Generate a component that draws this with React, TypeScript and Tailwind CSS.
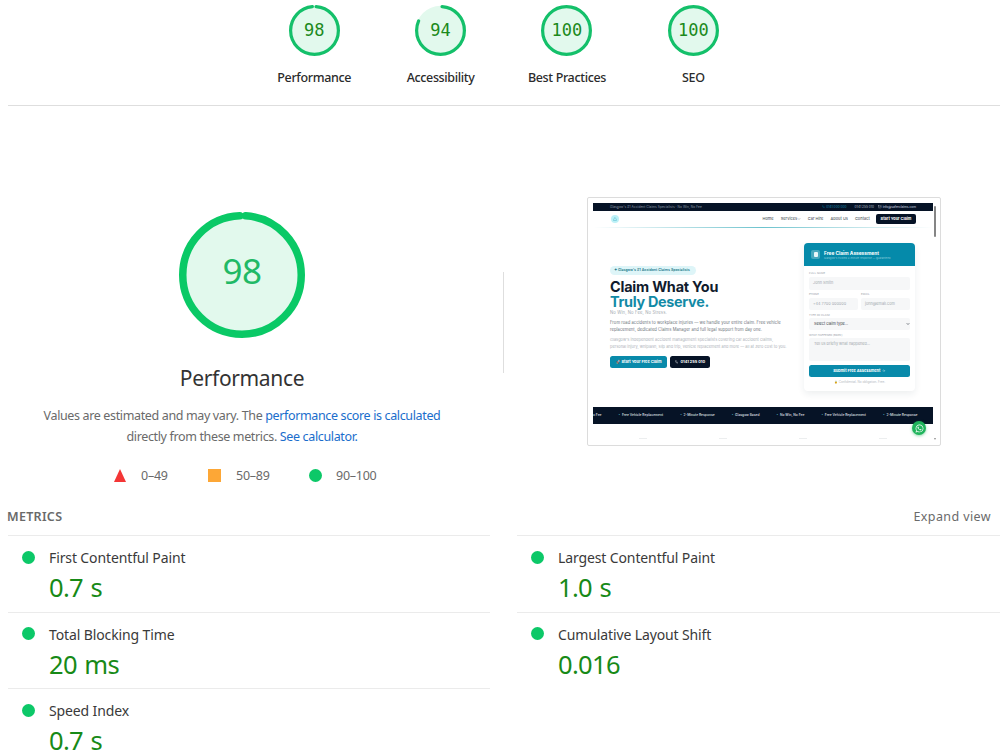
import React from 'react';
import { ArrowRight, ChevronDown, Mail, Phone, Triangle } from 'lucide-react';
import { FaWhatsapp } from 'react-icons/fa';

interface GaugeProps {
    score: number;
    arc: number;
    size: number;
    stroke: number;
    color: string;
    textClass: string;
}

const Gauge: React.FC<GaugeProps> = ({ score, arc, size, stroke, color, textClass }) => {
    const r = (size - stroke) / 2;
    const c = 2 * Math.PI * r;
    return (
        <div className="grid place-items-center">
            <svg width={size} height={size} className="col-start-1 row-start-1 -rotate-90">
                <circle cx={size / 2} cy={size / 2} r={r + stroke / 4} fill="#e2f9ed" />
                <circle
                    cx={size / 2}
                    cy={size / 2}
                    r={r}
                    fill="none"
                    stroke={color}
                    strokeWidth={stroke}
                    strokeLinecap={arc < 1 ? 'round' : 'butt'}
                    strokeDasharray={`${arc * c} ${c}`}
                    strokeDashoffset={arc < 1 ? -stroke / 2 : 0}
                />
            </svg>
            <span className={`z-10 col-start-1 row-start-1 ${textClass}`}>{score}</span>
        </div>
    );
};

const categories = [
    { label: 'Performance', score: 98, arc: 0.968 },
    { label: 'Accessibility', score: 94, arc: 0.8 },
    { label: 'Best Practices', score: 100, arc: 1 },
    { label: 'SEO', score: 100, arc: 1 },
];

const leftMetrics = [
    { label: 'First Contentful Paint', value: '0.7 s' },
    { label: 'Total Blocking Time', value: '20 ms' },
    { label: 'Speed Index', value: '0.7 s' },
];

const rightMetrics = [
    { label: 'Largest Contentful Paint', value: '1.0 s' },
    { label: 'Cumulative Layout Shift', value: '0.016' },
];

const Metric = ({ label, value }: { label: string; value: string }) => (
    <div className="flex h-[76.7px] shrink-0 border-t border-[#ebebeb] pl-[13.5px] pt-[15px]">
        <div className="-mt-[0.5px] size-[13px] shrink-0 rounded-full bg-[#0cc868]" />
        <div className="ml-[14.5px] whitespace-nowrap">
            <div className="-mt-[2px] text-[14px] leading-[18px] tracking-[-0.12px] text-[#3a3a3a]">{label}</div>
            <div className="mt-[3px] text-[25.5px] leading-[34px] tracking-[-0.65px] text-[#178a17] [word-spacing:1.5px]">{value}</div>
        </div>
    </div>
);

const Field = ({ label, placeholder }: { label: string; placeholder: string }) => (
    <div className="flex-1">
        <div className="text-[2.7px] leading-[4px] tracking-[0.1px] text-[#9aa1a8]">{label}</div>
        <div className="mt-[2px] flex h-[12.5px] items-center rounded-[2px] bg-[#f6f7f8] pl-[4px] text-[3.8px] text-[#a3a9af]">
            {placeholder}
        </div>
    </div>
);

const tickerItems = ['Free Vehicle Replacement', '2-Minute Response', 'Glasgow Based', 'No Win, No Fee', 'Free Vehicle Replacement', '2-Minute Response'];

// Final page capture shown next to the main gauge
const PageThumbnail = () => (
    <div className="relative h-[249px] w-[354px] rounded-[2px] border border-[#dcdcdc] bg-white pl-[5px] pt-[5px] font-[Inter,sans-serif]">
        <div className="relative h-[238px] w-[340px] overflow-hidden whitespace-nowrap bg-white">
            <div className="flex h-[8px] items-center bg-[#061326] pl-[17px] pr-[17px] text-[3.2px] text-[#8d99a8]">
                <span className="tracking-[0.06px]">Glasgow's #1 Accident Claims Specialists · No Win, No Fee</span>
                <span className="ml-auto flex items-center gap-[1px] text-[#128fb0]"><Phone size={3} />0141 000 000</span>
                <span className="ml-[8px] text-[#b5bec9]">0141 255 010</span>
                <span className="ml-[4px] flex items-center gap-[1px] text-[#d5dbe2]"><Mail size={3.5} />info@saferclaims.com</span>
            </div>
            <div className="flex h-[16px] items-center pl-[18px] pr-[17px] text-[3.9px] font-medium tracking-[0.05px] text-[#505962]">
                <div className="grid size-[8px] place-items-center rounded-full bg-[#bdf1f7] text-[#159cb8]">
                    <Triangle size={4} />
                </div>
                <span className="ml-auto">Home</span>
                <span className="ml-[7px] flex items-center">Services<ChevronDown size={4} /></span>
                <span className="ml-[6.5px]">Car Hire</span>
                <span className="ml-[7px]">About Us</span>
                <span className="ml-[7px]">Contact</span>
                <span className="ml-[6px] flex h-[10px] w-[40px] items-center justify-center rounded-[2px] bg-[#061326] font-bold tracking-normal text-white">Start Your Claim</span>
            </div>
            <div className="h-px bg-linear-to-r from-white via-[#6cc3ce] to-white" />
            <div className="flex">
                <div className="w-[211px] pl-[17px]">
                    <div className="mt-[38px] flex h-[9px] w-[86px] items-center rounded-full bg-[#def5f8] pl-[4px] text-[3.6px] font-semibold text-[#287b8c]">
                        ✦ Glasgow's #1 Accident Claims Specialists
                    </div>
                    <h2 className="mt-[5px] text-[14.4px] font-bold leading-[14.5px] tracking-[-0.2px] text-[#101b2d]">
                        Claim What You
                        <br />
                        <span className="tracking-[-0.3px] text-[#128aa6]">Truly Deserve.</span>
                    </h2>
                    <div className="mt-[1px] text-[4.2px] leading-[6px] tracking-[0.12px] text-[#a4aab0]">No Win, No Fee, No Stress.</div>
                    <div className="mt-[4px] text-[4.15px] leading-[6.6px] tracking-[0.03px] text-[#6d747c]">
                        From road accidents to workplace injuries — we handle your entire claim. Free vehicle
                        <br />
                        replacement, dedicated Claims Manager and full legal support from day one.
                    </div>
                    <div className="mt-[4px] text-[3.9px] leading-[6.5px] tracking-[0.03px] text-[#adb2b8]">
                        Glasgow's independent accident management specialists covering car accident claims,
                        <br />
                        personal injury, whiplash, slip and trip, vehicle replacement and more — all at zero cost to you.
                    </div>
                    <div className="mt-[6px] flex gap-[3px] text-[3.9px] font-bold text-white">
                        <span className="flex h-[12px] w-[57px] items-center justify-center rounded-[2.5px] bg-[#098aaa]">🚀 Start Your Free Claim</span>
                        <span className="flex h-[12px] w-[40px] items-center justify-center gap-[2px] rounded-[2.5px] bg-[#061326]"><Phone size={3.5} />0141 255 010</span>
                    </div>
                </div>
                <div className="mt-[15px] h-[148px] w-[111px] rounded-[4px] bg-white shadow-[0_3px_7px_rgba(20,50,70,0.08)]">
                    <div className="flex h-[23px] items-center rounded-t-[4px] bg-[#058aaa] pl-[7px]">
                        <div className="grid size-[9px] place-items-center rounded-[2px] bg-[#48a9bf]">
                            <div className="h-[5px] w-[4px] rounded-[1px] bg-[#eaf7f9]" />
                        </div>
                        <div className="ml-[4px]">
                            <div className="text-[4.8px] font-bold leading-[6px] text-white">Free Claim Assessment</div>
                            <div className="text-[2.7px] leading-[4px] text-[#85cbd9]">Glasgow's trusted 2-minute response — guaranteed</div>
                        </div>
                    </div>
                    <div className="flex flex-col gap-[2.4px] px-[5px] pt-[5px]">
                        <Field label="FULL NAME" placeholder="John Smith" />
                        <div className="flex gap-[3px]">
                            <Field label="PHONE" placeholder="+44 7700 000000" />
                            <Field label="EMAIL" placeholder="john@email.com" />
                        </div>
                        <div>
                            <div className="text-[2.7px] leading-[4px] text-[#9aa1a8]">TYPE OF CLAIM</div>
                            <div className="mt-[1px] flex h-[12.5px] items-center justify-between rounded-[2px] bg-[#f6f7f8] pl-[5px] text-[3.8px] text-[#3b4148]">
                                Select claim type...
                                <ChevronDown size={4} strokeWidth={4} />
                            </div>
                        </div>
                        <div>
                            <div className="text-[2.7px] leading-[4px] text-[#9aa1a8]">WHAT HAPPENED (BRIEF)</div>
                            <div className="mt-[1px] h-[23px] rounded-[2px] bg-[#f6f7f8] pl-[5px] pt-[3px] text-[3.8px] leading-[6px] text-[#a3a9af]">
                                Tell us briefly what happened...
                            </div>
                        </div>
                        <div className="mt-[2px] flex h-[12px] items-center justify-center gap-[2px] rounded-[2.5px] bg-[#098aaa] text-[3.9px] font-bold text-white">
                            Submit Free Assessment <ArrowRight size={3.5} />
                        </div>
                        <div className="mt-[1px] text-center text-[3px] leading-[4px] text-[#b5babf]">🔒 Confidential. No obligation. Free.</div>
                    </div>
                </div>
            </div>
            <div className="absolute inset-x-0 top-[204px] flex h-[17px] items-center gap-[17px] bg-[#061326] text-[3.3px] font-semibold text-[#cbd3dc]">
                <span>o Fee</span>
                {tickerItems.map((item, i) => (
                    <span key={i}><span className="text-[#4ba2b5]">•</span>&nbsp; {item}</span>
                ))}
            </div>
            <div className="absolute inset-x-0 top-[235px] flex justify-between px-[46px]">
                <div className="h-px w-[8px] bg-[#eceeef]" />
                <div className="h-px w-[8px] bg-[#eceeef]" />
                <div className="h-px w-[8px] bg-[#eceeef]" />
                <div className="h-px w-[8px] bg-[#eceeef]" />
            </div>
        </div>
        <div className="absolute right-[4px] top-[8px] h-[31px] w-[2.5px] rounded-full bg-[#858585]" />
        <div className="absolute bottom-[10px] right-[14px] grid size-[14px] place-items-center rounded-full bg-[#20b45c] text-white shadow-[0_1px_3px_rgba(32,180,92,0.5)]">
            <FaWhatsapp size={9} />
        </div>
        <div className="absolute bottom-[5px] right-[4px] h-0 w-0 border-x-[1.5px] border-t-2 border-x-transparent border-t-[#8d8d8d]" />
    </div>
);

export default function App() {
    return (
        <main className="flex h-[750px] w-[1000px] flex-col overflow-hidden bg-white font-['Noto_Sans',sans-serif]">
            {/* Category scores */}
            <header className="ml-2 flex h-[106px] shrink-0 border-b border-[#dedede] pl-[243px] pt-[5px]">
                {categories.map((cat) => (
                    <div key={cat.label} className="flex w-[126.4px] flex-col items-center">
                        <Gauge
                            score={cat.score}
                            arc={cat.arc}
                            size={51}
                            stroke={3.2}
                            color="#14c06a"
                            textClass="font-['DejaVu_Sans_Mono',monospace] text-[17px] text-[#1c8a1c]"
                        />
                        <div className="mt-[13px] whitespace-nowrap text-[12.5px] font-medium leading-[18px] tracking-[-0.35px] text-[#2b2b2b]">{cat.label}</div>
                    </div>
                ))}
            </header>

            {/* Performance summary */}
            <section className="flex h-[394px] shrink-0">
                <div className="flex w-[484px] flex-col items-center pt-[105.5px]">
                    <Gauge
                        score={98}
                        arc={0.982}
                        size={126}
                        stroke={7.5}
                        color="#0ac966"
                        textClass="-mt-[6px] text-[35px] tracking-[-0.5px] text-[#21b966]"
                    />
                    <h1 className="mt-[26.5px] text-[21px] leading-[28px] tracking-[-0.35px] text-[#333]">Performance</h1>
                    <p className="mt-[12.5px] whitespace-nowrap text-center text-[12.5px] leading-[21.5px] tracking-[-0.36px] text-[#6a6a6a]">
                        Values are estimated and may vary. The <a className="text-[#1a6dcc]">performance score is calculated</a>
                        <br />
                        directly from these metrics. <a className="text-[#1a6dcc]">See calculator.</a>
                    </p>
                    <div className="mt-[18px] flex items-center self-start pl-[114px] text-[12.5px] leading-[20px] tracking-[-0.25px] text-[#6a6a6a]">
                        <svg width="12" height="13"><path d="M6 0L12 13H0Z" fill="#f43636" /></svg>
                        <span className="ml-[15px] w-[28px]">0–49</span>
                        <div className="ml-[39px] size-[13px] bg-[#fda736]" />
                        <span className="ml-[15px] w-[34px]">50–89</span>
                        <div className="ml-[39px] size-[13px] rounded-full bg-[#0cc868]" />
                        <span className="ml-[14px]">90–100</span>
                    </div>
                </div>
                <div className="ml-[19px] mt-[166px] h-[101px] w-px bg-[#dedede]" />
                <div className="ml-[83px] mt-[91px]">
                    <PageThumbnail />
                </div>
            </section>

            {/* Metrics */}
            <section>
                <div className="flex h-[35px] items-center justify-between pl-[7px] pr-[9px] text-[12.5px]">
                    <h2 className="font-semibold tracking-[0.3px] text-[#6a6a6a]">METRICS</h2>
                    <button className="tracking-[0.4px] text-[#6a6a6a]">Expand view</button>
                </div>
                <div className="flex justify-between pl-2">
                    <div className="flex w-[482px] flex-col">
                        {leftMetrics.map((m) => <Metric key={m.label} {...m} />)}
                    </div>
                    <div className="flex w-[483px] flex-col">
                        {rightMetrics.map((m) => <Metric key={m.label} {...m} />)}
                    </div>
                </div>
            </section>
        </main>
    );
}
